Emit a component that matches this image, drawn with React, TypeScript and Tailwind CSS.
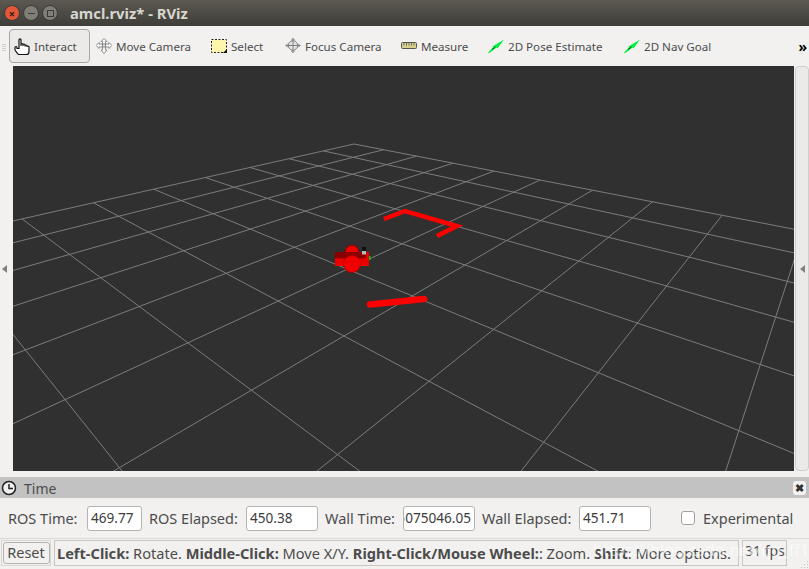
import React from "react";

const FONT = { fontFamily: '"Noto Sans", "Open Sans", sans-serif' };

// rough homography fitted to the grid crossings in the viewport
const project = (u: number, v: number) => {
  const w = 1 - 0.04835 * u - 0.05596 * v;
  return {
    x: (354 + 11.1 * u - 48.66 * v) / w - 13,
    y: (144 - 1.5 * u - 1.55 * v) / w - 66,
    w,
  };
};

const gridLine = (u0: number, v0: number, u1: number, v1: number) => {
  const a = project(u0, v0);
  let t = 1;
  let b = project(u1, v1);
  while (b.w < 0.1 && t > 0) {
    t -= 0.01;
    b = project(u0 + (u1 - u0) * t, v0 + (v1 - v0) * t);
  }
  return `M${a.x.toFixed(1)} ${a.y.toFixed(1)}L${b.x.toFixed(1)} ${b.y.toFixed(1)}`;
};

const Grid = () => {
  const idx = Array.from({ length: 11 }, (_, i) => i);
  return (
    <svg width="781" height="405" viewBox="0 0 781 405" className="block">
      {idx.map((i) => (
        <path key={`u${i}`} d={gridLine(i, 0, i, 10)} stroke="#7c7c7c" fill="none" />
      ))}
      {idx.map((i) => (
        <path key={`v${i}`} d={gridLine(0, i, 10, i)} stroke="#7c7c7c" fill="none" />
      ))}
      {/* laser scan */}
      <path d="M371 153L392 145L444 160L424 170" stroke="#ff0000" strokeWidth="4.5" fill="none" />
      <path d="M357 238.500L411 233" stroke="#ff0000" strokeWidth="6.500" strokeLinecap="round" fill="none" />
      {/* robot */}
      <circle cx="339" cy="186" r="7" fill="#ee0000" stroke="#7a0000" />
      <rect x="322" y="186" width="34" height="14" fill="#ee0000" />
      <rect x="322" y="186" width="31" height="6.500" fill="#8a0000" />
      <circle cx="339" cy="198" r="8.500" fill="#f00000" stroke="#b00000" strokeWidth="0.700" />
      <rect x="349" y="181" width="4" height="4" fill="#111111" />
      <rect x="349" y="185" width="4" height="3.500" fill="#bbbbbb" />
      <rect x="356" y="190" width="1.500" height="4" fill="#00cc00" />
    </svg>
  );
};

const PoseIcon = () => (
  <svg width="16" height="14" viewBox="0 0 16 14">
    <path d="M0 13.500L5 8.500L4.500 7.500L16 0.500L9.500 9.500L8.500 8.500L1.500 14Z" fill="#00f040" />
    <path d="M4 10.500L7.500 8" stroke="#005522" strokeWidth="1" />
  </svg>
);

const HandIcon = () => (
  <svg width="16" height="17" viewBox="0 0 16 17" fill="#ffffff" stroke="#111111" strokeWidth="1.200">
    <path d="M5 1.800a1 1 0 0 1 2 0V8V6.500a1 1 0 0 1 2 0V8V7a1 1 0 0 1 2 0v1.500V8a1 1 0 0 1 2 0v1a1 1 0 0 1 2 0V13c0 2-1 3.500-2 3.500H5C3.500 16.500 2.500 14 1 12V9.500a1 1 0 0 1 2 0v1h2Z" />
  </svg>
);

const MoveIcon = () => (
  <svg width="16" height="16" viewBox="0 0 16 16" fill="#f6f6f6" stroke="#777777" strokeWidth="0.800">
    <path d="M8 0.500L11 3.500H9.500V6H13V4.500L15.800 7.500L13 10.500V9H9.500V12H11L8 15.500L5 12H6.500V9H3V10.500L0.200 7.500L3 4.500V6H6.500V3.500H5Z" />
    <path d="M6.500 6H9.500V9H6.500Z" fill="#e0e0e0" />
  </svg>
);

const SelectIcon = () => (
  <svg width="16" height="14" viewBox="0 0 16 14">
    <rect x="0.500" y="0.500" width="15" height="13" fill="#fff6ae" stroke="#222222" strokeDasharray="2 1.500" />
    <path d="M12 14H16V10Z" fill="#111111" />
  </svg>
);

const FocusIcon = () => (
  <svg width="17" height="17" viewBox="0 0 17 17" fill="none" stroke="#7a7a7a" strokeWidth="1">
    <circle cx="8.500" cy="8.500" r="5" fill="#e4e4e4" />
    <path d="M8.500 1V16M1 8.500H16M6.500 3L8.500 1L10.500 3M6.500 14L8.500 16L10.500 14M3 6.500L1 8.500L3 10.500M14 6.500L16 8.500L14 10.500" />
  </svg>
);

const RulerIcon = () => (
  <svg width="16" height="8" viewBox="0 0 16 8">
    <rect x="0.500" y="0.500" width="15" height="6" rx="1" fill="#d8cf8e" stroke="#555555" />
    <path d="M3 1V3.500M5.500 1V3.500M8 1V3.500M10.500 1V3.500M13 1V3.500" stroke="#555555" strokeWidth="0.800" />
  </svg>
);

const tools = [
  { name: "Move Camera", icon: <MoveIcon />, w: "w-[115px]" },
  { name: "Select", icon: <SelectIcon />, w: "w-[74px]" },
  { name: "Focus Camera", icon: <FocusIcon />, w: "w-[116px]" },
  { name: "Measure", icon: <RulerIcon />, w: "w-[87px]" },
  { name: "2D Pose Estimate", icon: <PoseIcon />, w: "w-[136px]" },
  { name: "2D Nav Goal", icon: <PoseIcon />, w: "w-[100px]" },
];

const Field = ({ value, w, clip }: { value: string; w: string; clip?: boolean }) => (
  <div className={`${w} h-[25px] bg-white border border-[#b5b3b0] rounded-[3px] overflow-hidden flex items-center text-[13.6px] text-[#3c3c3c] ${clip ? "justify-end pr-[3px]" : "pl-[3px]"}`}>
    <span className="whitespace-nowrap">{value}</span>
  </div>
);

const Label = ({ w, children }: { w: string; children: React.ReactNode }) => (
  <span className={`${w} text-[14.5px] text-[#4c4c4c] whitespace-nowrap mt-[2px]`}>{children}</span>
);

export default function App() {
  return (
    <div className="w-[809px] h-[569px] flex flex-col bg-[#f2f1f0] overflow-hidden relative" style={FONT}>
      {/* title bar */}
      <div className="h-[26px] flex items-center bg-gradient-to-b from-[#5b5951] to-[#3f3d38]">
        <div className="flex items-center gap-[3px] pl-[4px]">
          <div className="w-[16px] h-[16px] rounded-full bg-[#e2583a] border border-[#3a3a36] flex items-center justify-center text-[11px] leading-none text-[#3a1a10] font-bold">×</div>
          <div className="w-[16px] h-[16px] rounded-full bg-[#7f7e77] border border-[#3a3a36] flex items-center justify-center">
            <div className="w-[7px] h-[1px] bg-[#3a3a36]" />
          </div>
          <div className="w-[16px] h-[16px] rounded-full bg-[#7f7e77] border border-[#3a3a36] flex items-center justify-center">
            <div className="w-[7px] h-[7px] border border-[#3a3a36]" />
          </div>
        </div>
        <span className="ml-[12px] text-[14.800px] font-bold text-[#d8d6cf]">amcl.rviz* - RViz</span>
      </div>

      {/* toolbar */}
      <div className="h-[40px] flex items-center pl-[2px] pr-[2px]">
        <div className="w-[4px] flex flex-col gap-[1px] mr-[3px] mt-[2px]">
          <div className="h-[1px] bg-[#d0cecb]" />
          <div className="h-[1px] bg-[#d0cecb]" />
          <div className="h-[1px] bg-[#d0cecb]" />
          <div className="h-[1px] bg-[#d0cecb]" />
        </div>
        <div className="w-[81px] h-[34px] mr-[6px] flex items-center gap-[4px] pl-[4px] border border-[#a8a6a2] rounded-[4px] bg-[#ebeae8]">
          <HandIcon />
          <span className="text-[11.600px] text-[#4c4c4c] mt-[2px]">Interact</span>
        </div>
        {tools.map((t) => (
          <div key={t.name} className={`${t.w} flex items-center gap-[4px]`}>
            <div className="w-[16px] flex justify-center shrink-0">{t.icon}</div>
            <span className="text-[11.600px] text-[#4c4c4c] whitespace-nowrap mt-[1px]">{t.name}</span>
          </div>
        ))}
        <span className="ml-auto text-[14px] font-bold text-black leading-none mt-[1px]">»</span>
      </div>

      {/* viewport */}
      <div className="h-[405px] flex">
        <div className="w-[13px] flex items-center justify-start pl-[2px]">
          <div className="w-0 h-0 border-y-[4px] border-y-transparent border-r-[5px] border-r-[#808080]" />
        </div>
        <div className="w-[781px] h-[405px] bg-[#303030] overflow-hidden">
          <Grid />
        </div>
        <div className="w-[14px] flex items-center justify-center border border-[#d0cecb] rounded-[4px] bg-[#ebeae8] ml-[1px]">
          <div className="w-0 h-0 border-y-[4px] border-y-transparent border-r-[5px] border-r-[#808080]" />
        </div>
      </div>

      {/* time panel */}
      <div className="mt-[6px] h-[21px] bg-[#c2c2c2] flex items-center pl-[1px] pr-[3px]">
        <svg width="16" height="16" viewBox="0 0 16 16" fill="none" stroke="#222222">
          <circle cx="8" cy="8" r="6.500" fill="#f2f2f2" strokeWidth="1.500" />
          <path d="M8 4V8.500H12" strokeWidth="1.500" />
        </svg>
        <span className="ml-[7px] text-[14px] text-[#4c4c4c] mt-[1px]">Time</span>
        <div className="ml-auto w-[13px] h-[14px] rounded-[3px] bg-[#f2f1f0] flex items-center justify-center text-[11px] leading-none font-bold text-[#333333]">✖</div>
      </div>
      <div className="h-[41px] flex items-center pl-[8px] border-b border-[#dad8d5]">
        <Label w="w-[79px]">ROS Time:</Label>
        <Field value="469.77" w="w-[55px]" />
        <div className="w-[7px]" />
        <Label w="w-[97px]">ROS Elapsed:</Label>
        <Field value="450.38" w="w-[72px]" />
        <div className="w-[7px]" />
        <Label w="w-[78px]">Wall Time:</Label>
        <Field value="1575075046.05" w="w-[72px]" clip />
        <div className="w-[7px]" />
        <Label w="w-[97px]">Wall Elapsed:</Label>
        <Field value="451.71" w="w-[72px]" />
        <div className="w-[30px]" />
        <div className="w-[14px] h-[14px] bg-white border border-[#a5a3a0] rounded-[3px]" />
        <div className="w-[8px]" />
        <Label w="w-[91px]">Experimental</Label>
      </div>

      {/* status bar */}
      <div className="flex-1 flex items-start pt-[1px] pl-[1px] relative">
        <div className="w-[50px] h-[26px] border border-[#d8d6d3] flex items-center justify-center mr-[3px]">
          <div className="w-[47px] h-[22px] border border-[#b5b3b0] rounded-[3px] flex items-center justify-center text-[14.500px] text-[#4c4c4c]">Reset</div>
        </div>
        <div className="w-[685px] h-[26px] border border-[#c8c6c3] pl-[2px] pt-[2px] flex items-center text-[14.600px] text-[#4c4c4c] whitespace-nowrap overflow-hidden mr-[3px]">
          <b>Left-Click:</b>&nbsp;Rotate.&nbsp;<b>Middle-Click:</b>&nbsp;Move X/Y.&nbsp;<b>Right-Click/Mouse Wheel:</b>: Zoom.&nbsp;<b>Shift</b>: More options.
        </div>
        <div className="w-[45px] h-[26px] border border-[#c8c6c3] pl-[2px] text-[14px] leading-[20px] text-[#4c4c4c] whitespace-nowrap overflow-hidden">31 fps</div>
        <span className="absolute left-[593px] -top-[1px] text-[16.500px] text-white/60 whitespace-nowrap">https://blog.csdn.net/qq_ff17</span>
        <svg width="9" height="9" viewBox="0 0 9 9" className="absolute right-0 bottom-0" fill="#c4c2bf">
          <rect x="7" y="1" width="1" height="1" />
          <rect x="4" y="4" width="1" height="1" />
          <rect x="7" y="4" width="1" height="1" />
          <rect x="1" y="7" width="1" height="1" />
          <rect x="4" y="7" width="1" height="1" />
          <rect x="7" y="7" width="1" height="1" />
        </svg>
      </div>
    </div>
  );
}
